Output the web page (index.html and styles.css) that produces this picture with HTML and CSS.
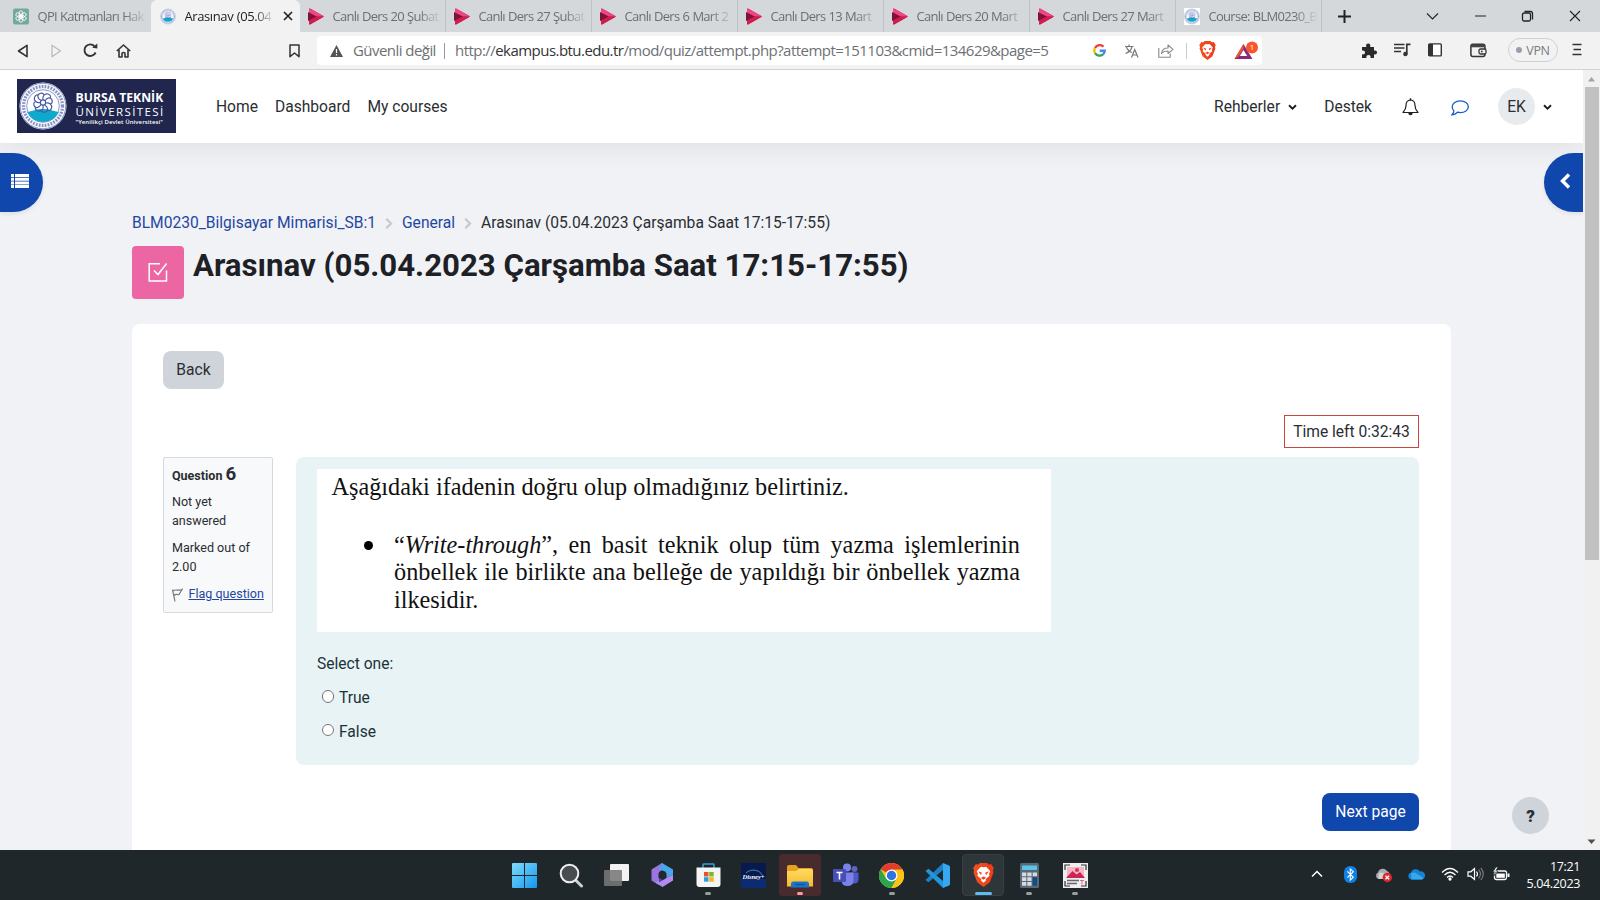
FILE: index.html
```html
<!DOCTYPE html>
<html lang="tr">
<head>
<meta charset="utf-8">
<title>Arasınav (05.04.2023 Çarşamba Saat 17:15-17:55)</title>
<link rel="stylesheet" href="styles.css">
</head>
<body>
<svg class="defs" aria-hidden="true">
  <defs>
    <linearGradient id="brave-g" x1="0" x2="1"><stop offset="0" stop-color="#f4511e"/><stop offset="1" stop-color="#f03a17"/></linearGradient>
    <linearGradient id="win-g" x1="0" y1="0" x2="1" y2="1"><stop offset="0" stop-color="#7fdcfb"/><stop offset="1" stop-color="#1296ee"/></linearGradient>
    <linearGradient id="fold-g" x1="0" y1="0" x2="0" y2="1"><stop offset="0" stop-color="#ffdc62"/><stop offset="1" stop-color="#f6b92c"/></linearGradient>
  </defs>
  <symbol id="play" viewBox="0 0 16 17">
    <path d="M1 1.500Q1 0 2.500.7L15.500 8Q16 8.500 15.500 9L2.500 16.300Q1 17 1 15.500z" fill="#d81b5a"/><path d="M0 4 9 8.500 0 13z" fill="#7d1338"/><path d="M1 1.500Q1 0 2.500.7L15.800 8.500H9L1 4.500z" fill="#ee4586"/><path d="M1 12.500 9 8.500h6.800L2.500 16.300Q1 17 1 15.500z" fill="#d01c50"/>
  </symbol>
  <symbol id="seal" viewBox="0 0 48 48">
    <circle cx="24" cy="24" r="23.500" fill="#f4f6fb"/>
    <circle cx="24" cy="24" r="22.800" fill="none" stroke="#6d7bb4" stroke-width=".8"/>
    <circle cx="24" cy="24" r="19.500" fill="none" stroke="#8290c4" stroke-width="3.200" stroke-dasharray="1.700 1.300"/>
    <circle cx="24" cy="24" r="16.300" fill="#fff" stroke="#7483bb" stroke-width=".8"/>
    <path d="M8.300 30C15 28.500 18 27 24 27s9 1.500 15.700 3C37 36.500 31 40 24 40S11 36.500 8.300 30z" fill="#0fa9cb"/>
    <g fill="none" stroke="#4a5aa3" stroke-width="1.200">
      <circle cx="24" cy="20.500" r="2.600"/>
      <path d="M24 18c-1-4 2-7 5-6s3 3 2 4M26 19c2-4 6-4 7-1s-1 4-2 4M26.500 21c4-1 7 2 6 5s-3 3-4 2M25.500 23c4 2 4 6 1 7s-4-1-4-2M24 23c1 4-2 7-5 6s-3-3-2-4M22 22.500c-2 4-6 4-7 1s1-4 2-4M21.500 20.500c-4 1-7-2-6-5s3-3 4-2M22 18.500c-4-2-4-6-1-7s4 1 4 2"/>
    </g>
  </symbol>
  <symbol id="brave" viewBox="0 0 20 23">
    <path d="M5 1.500 6.500 0h7L15 1.500l2.500-.3L20 5l-1 2 .6 2L16 18.500 10 23 4 18.500.4 9 1 7 0 5l2.500-3.800z" fill="url(#brave-g)"/>
    <path d="m10 4 2.500-.5 4 4.500-1.200 2.300.5 2-3.600 3 .2 1.400L10 19l-2.400-2.300.2-1.400-3.600-3 .5-2L3.500 8l4-4.500z" fill="#fff"/>
    <path d="m4.800 8 3.700 1.300-1 2.200zM15.200 8l-3.700 1.300 1 2.200zM7.500 14.200 10 13l2.500 1.200L10 16z" fill="#f0431b"/>
  </symbol>
  <symbol id="chev" viewBox="0 0 9 6"><path d="M1 1.200 4.500 4.600 8 1.200" fill="none" stroke="#1d2125" stroke-width="1.900"/></symbol>
</svg>

<div class="tabs">
  <div class="tab first">
    <svg class="fav" viewBox="0 0 17 17"><rect width="17" height="17" rx="2" fill="#74a899"/><g fill="none" stroke="#fff" stroke-width=".9"><rect x="6.500" y="2.500" width="4" height="7" rx="2"/><rect x="6.500" y="2.500" width="4" height="7" rx="2" transform="rotate(60 8.500 8.500)"/><rect x="6.500" y="2.500" width="4" height="7" rx="2" transform="rotate(120 8.500 8.500)"/><rect x="6.500" y="2.500" width="4" height="7" rx="2" transform="rotate(180 8.500 8.500)"/><rect x="6.500" y="2.500" width="4" height="7" rx="2" transform="rotate(240 8.500 8.500)"/><rect x="6.500" y="2.500" width="4" height="7" rx="2" transform="rotate(300 8.500 8.500)"/></g></svg>
    <span class="label">QPI Katmanları Hak</span>
  </div>
  <div class="tab active">
    <svg class="fav"><use href="#seal"/></svg>
    <span class="label">Arasınav (05.04</span>
    <svg class="close" viewBox="0 0 10 10"><path d="m1 1 8 8M9 1 1 9" stroke="#222" stroke-width="1.700"/></svg>
  </div>
  <div class="tab"><svg class="fav"><use href="#play"/></svg><span class="label">Canlı Ders 20 Şubat</span></div>
  <div class="tab"><svg class="fav"><use href="#play"/></svg><span class="label">Canlı Ders 27 Şubat</span></div>
  <div class="tab"><svg class="fav"><use href="#play"/></svg><span class="label">Canlı Ders 6 Mart 2</span></div>
  <div class="tab"><svg class="fav"><use href="#play"/></svg><span class="label">Canlı Ders 13 Mart</span></div>
  <div class="tab"><svg class="fav"><use href="#play"/></svg><span class="label">Canlı Ders 20 Mart</span></div>
  <div class="tab"><svg class="fav"><use href="#play"/></svg><span class="label">Canlı Ders 27 Mart</span></div>
  <div class="tab"><svg class="fav seal-bg"><use href="#seal"/></svg><span class="label">Course: BLM0230_B</span></div>
  <svg class="plus" viewBox="0 0 13 13"><path d="M6.500 0v13M0 6.500h13" stroke="#222" stroke-width="2"/></svg>
  <svg class="win" viewBox="0 0 160 14" fill="none" stroke="#222" stroke-width="1.100">
    <path d="m1 4.500 5.500 5.500L12 4.500M49 7h11M144 2l10 10M154 2 144 12"/>
    <rect x="96.500" y="4" width="8" height="8" rx="1.500" stroke-width="1.300"/><path d="M98.500 2.500h6q2 0 2 2v6" stroke-width="1.300"/>
  </svg>
</div>

<div class="toolbar">
  <div class="nav-icons">
    <svg width="12" height="14" viewBox="0 0 12 14"><path d="M10 1.300v11.400L1.500 7z" fill="none" stroke="#333" stroke-width="1.600" stroke-linejoin="round"/></svg>
    <svg width="12" height="14" viewBox="0 0 12 14"><path d="M2 1.300v11.400L10.500 7z" fill="none" stroke="#bbb" stroke-width="1.300" stroke-linejoin="round"/></svg>
    <svg width="15" height="15" viewBox="0 0 15 15"><path d="M12.600 9.500A5.800 5.800 0 1 1 11.600 3.300" fill="none" stroke="#333" stroke-width="1.900"/><path d="M9.200 4.800 14.300 5.600 14.300.6z" fill="#333"/></svg>
    <svg class="home" width="15" height="14" viewBox="0 0 15 14"><path d="M.8 7 7.500 1l6.700 6M3 5.700V13h3V9.500q0-1 1.500-1T9 9.500V13h3V5.700" fill="none" stroke="#333" stroke-width="1.600" stroke-linejoin="round"/></svg>
  </div>
  <svg class="bookmark" width="11" height="14" viewBox="0 0 11 14"><path d="M1 .9h9v11.800L5.500 9 1 12.700z" fill="none" stroke="#333" stroke-width="1.500" stroke-linejoin="round"/></svg>
  <div class="address">
    <svg class="warn" width="13" height="12" viewBox="0 0 13 12"><path d="M6.500 0 13 12H0z" fill="#555"/><path d="M6.500 4v4M6.500 9v1.400" stroke="#fff" stroke-width="1.200"/></svg>
    <span class="insecure">Güvenli değil</span><i class="bar"></i>
    <span class="url">http://<b>ekampus.btu.edu.tr</b>/mod/quiz/attempt.php?attempt=151103&amp;cmid=134629&amp;page=5</span>
    <div class="address-icons">
      <svg width="13" height="13" viewBox="0 0 13 13" fill="none" stroke-width="2.400"><path d="M10.500 2.800A5.200 5.200 0 0 0 2 4" stroke="#ea4335"/><path d="M2 4a5.200 5.200 0 0 0 0 5" stroke="#fbbc05"/><path d="M2 9a5.200 5.200 0 0 0 8 1.300" stroke="#34a853"/><path d="M10 10.300a5 5 0 0 0 1.700-3.600H6.700" stroke="#4285f4"/></svg>
      <svg width="14" height="14" viewBox="0 0 14 14" fill="none" stroke="#777" stroke-width="1.200"><path d="M0 2.500h8.500M4 .5v2M1.500 3C2.500 6 5 8 7 8.500M7 3C6 6.500 3 8.500.5 9.500M6.500 13.500l3.200-8 3.300 8M7.500 11h4.500"/></svg>
      <svg width="16" height="14" viewBox="0 0 16 14" fill="none" stroke="#888" stroke-width="1.100" stroke-linejoin="round"><path d="M.8 4v9.200h11.400V9.500M3.500 9.500C4 5.500 6 4 10 4V1l5 4.300L10 9.500V7C7 7 5 7.500 3.500 9.500z"/></svg>
      <i class="bar thin"></i>
      <svg class="brave-sm" width="17" height="19"><use href="#brave"/></svg>
      <svg width="26" height="20" viewBox="0 0 26 20"><path d="M9.500 3 18.500 18H.5z" fill="#8a2a7d"/><path d="M9.500 3 .5 18l4-2.300L9.500 7.500z" fill="#f0562c"/><path d="m9.500 9 3.700 6H5.800z" fill="#fff"/><circle cx="18" cy="6.500" r="6" fill="#fb542b"/><text x="18" y="9" text-anchor="middle" class="badge">1</text></svg>
    </div>
  </div>
  <div class="tools">
    <svg width="16" height="15" viewBox="0 0 16 15"><path d="M1 4h4.300C4.600 2 5.500.5 7.200.5S9.800 2 9.200 4H13v3.800c1.700-.6 3 .2 3 1.700s-1.300 2.300-3 1.700V15H9.500c.5-1.800-.4-3-2-3s-2.500 1.200-2 3H1v-3.700c1.700.4 3-.4 3-1.900S2.700 7.100 1 7.600z" fill="#2a2a2a"/></svg>
    <svg width="17" height="14" viewBox="0 0 17 14"><path d="M0 1.500h10.500M0 5h10.500M0 8.500h7" stroke="#333" stroke-width="1.700"/><path d="M12.800 11.500V1.400H16.500" fill="none" stroke="#333" stroke-width="1.700"/><circle cx="11.400" cy="11" r="2.200" fill="#333"/></svg>
    <svg width="14" height="14" viewBox="0 0 14 14"><rect x=".7" y=".9" width="12.600" height="12" rx="1" fill="#fff" stroke="#333" stroke-width="1.400"/><path d="M1 1h4v12H1z" fill="#333"/></svg>
    <svg class="wallet" width="17" height="15" viewBox="0 0 17 15"><rect x=".9" y="1.200" width="14" height="12.200" rx="2" fill="none" stroke="#333" stroke-width="1.500"/><path d="M1 1.500h14v2.800H1z" fill="#444"/><rect x="9" y="6" width="7" height="5" rx="1.500" fill="#f2f2f2" stroke="#333" stroke-width="1.300"/><circle cx="11.800" cy="8.500" r=".9" fill="#333"/></svg>
    <span class="vpn"><i></i>VPN</span>
    <svg width="10" height="14" viewBox="0 0 10 14"><path d="M.5 1.500h9M1.500 6.500H9M.5 11.500h9" stroke="#333" stroke-width="1.700"/></svg>
  </div>
</div>

<div class="viewport">
  <div class="page">
    <header class="navbar">
      <div class="brand">
        <svg class="brand-seal"><use href="#seal"/></svg>
        <div class="brand-text"><strong>BURSA TEKNİK</strong><span>ÜNİVERSİTESİ</span><em>"Yenilikçi Devlet Üniversitesi"</em></div>
      </div>
      <nav class="primary"><a>Home</a><a>Dashboard</a><a>My courses</a></nav>
      <div class="usernav">
        <a>Rehberler</a><svg class="chev"><use href="#chev"/></svg>
        <a class="destek">Destek</a>
        <svg class="bell" width="17" height="18" viewBox="0 0 17 18"><path d="M8.500 2C5.300 2.200 4 4.500 4 7.500c0 3-1 5-3 7h15c-2-2-3-4-3-7 0-3-1.300-5.300-4.500-5.500z" fill="none" stroke="#1d2125" stroke-width="1.200" stroke-linejoin="round"/><path d="M8.500.3v1.800" stroke="#1d2125" stroke-width="1.500"/><path d="M6.300 15a2.200 2.200 0 0 0 4.400 0z" fill="#1d2125"/></svg>
        <svg class="bubble" width="18" height="16" viewBox="0 0 18 16"><path d="M9.300.8c4.500 0 8 2.500 8 5.900s-3.500 5.900-8 5.900c-1 0-2-.2-2.800-.4C5 13.700 3 14.600 1 14.800c1.200-1.200 1.800-2.500 1.900-3.900C1.700 9.800 1.200 8.300 1.200 6.700c0-3.400 3.600-5.900 8.100-5.900z" fill="none" stroke="#1a5cc8" stroke-width="1.300"/></svg>
        <span class="avatar">EK</span><svg class="chev user"><use href="#chev"/></svg>
      </div>
    </header>

    <button class="drawer left"><svg width="18" height="14" viewBox="0 0 18 14" fill="#fff"><path d="M0 0h3v3H0zM4 0h14v3H4zM0 3.700h3v3H0zM4 3.700h14v3H4zM0 7.400h3v3H0zM4 7.400h14v3H4zM0 11.100h3V14H0zM4 11.100h14V14H4z"/></svg></button>
    <button class="drawer right"><svg width="11" height="16" viewBox="0 0 11 16"><path d="M9 1.500 2.500 8 9 14.500" fill="none" stroke="#fff" stroke-width="3.400"/></svg></button>

    <main class="main">
      <div class="crumbs">
        <a>BLM0230_Bilgisayar Mimarisi_SB:1</a>
        <svg width="8" height="11" viewBox="0 0 8 11"><path d="M1.300.8 6 5.500 1.300 10.200" fill="none" stroke="#c6cad0" stroke-width="2.300"/></svg>
        <a>General</a>
        <svg width="8" height="11" viewBox="0 0 8 11"><path d="M1.300.8 6 5.500 1.300 10.200" fill="none" stroke="#c6cad0" stroke-width="2.300"/></svg>
        <span>Arasınav (05.04.2023 Çarşamba Saat 17:15-17:55)</span>
      </div>
      <div class="title">
        <span class="activity"><svg width="20" height="20" viewBox="0 0 20 20" fill="none" stroke="#fff" stroke-width="1.500"><path d="M12 1.700H1.200V19H18.500V8.500"/><path d="m6 8.500 4 4L18.600 1.500"/></svg></span>
        <h1>Arasınav (05.04.2023 Çarşamba Saat 17:15-17:55)</h1>
      </div>
      <section class="card">
        <button class="btn back">Back</button>
        <div class="timer-row"><div class="timer">Time left 0:32:43</div></div>
        <div class="question">
          <aside class="info">
            <h3>Question <span>6</span></h3>
            <p>Not yet<br>answered</p>
            <p>Marked out of<br>2.00</p>
            <div class="flag"><svg width="11" height="14" viewBox="0 0 11 14"><path d="M.5 1.500 3 13.500M1 3C4 .5 6 3.500 10 1.500L7 6.500C5 7 4 5.500 2 7.500" fill="none" stroke="#777" stroke-width="1.200"/></svg><a>Flag question</a></div>
          </aside>
          <div class="content">
            <div class="sheet">
              <p>Aşağıdaki ifadenin doğru olup olmadığınız belirtiniz.</p>
              <div class="item">
                <i class="dot"></i>
                <div class="lines"><p class="just">“<em>Write-through</em>”, en basit teknik olup tüm yazma işlemlerinin</p><p class="just">önbellek ile birlikte ana belleğe de yapıldığı bir önbellek yazma</p><p>ilkesidir.</p></div>
              </div>
            </div>
            <div class="prompt">Select one:</div>
            <label class="answer"><i class="radio"></i>True</label>
            <label class="answer"><i class="radio"></i>False</label>
          </div>
        </div>
        <div class="next-row"><button class="btn next">Next page</button></div>
      </section>
    </main>
    <button class="help">?</button>
  </div>
  <div class="scrollbar">
    <svg width="9" height="5" viewBox="0 0 9 5"><path d="M4.500 0 8 4.500H1z" fill="#a3a3a3"/></svg>
    <i class="thumb"></i>
    <svg class="down" width="9" height="5" viewBox="0 0 9 5"><path d="M4.500 5 8.500.5h-8z" fill="#505050"/></svg>
  </div>
</div>

<footer class="taskbar">
  <div class="apps">
    <span class="app"><svg width="25" height="25" viewBox="0 0 25 25" fill="url(#win-g)"><path d="M1 0h11v12H0V1q0-1 1-1zM13 0h11q1 0 1 1v11H13zM0 13h12v12H1q-1 0-1-1zM13 13h12v11q0 1-1 1H13z"/></svg></span>
    <span class="app search"><svg width="25" height="25" viewBox="0 0 25 25"><path d="m16.500 17 6 6" stroke="#cfcfcf" stroke-width="3" stroke-linecap="round"/><circle cx="10.500" cy="10.500" r="8.800" fill="#4a4d50" stroke="#eee" stroke-width="2"/></svg></span>
    <span class="app"><svg width="25" height="25" viewBox="0 0 25 25"><rect x="6" y="1" width="19" height="17" rx="1" fill="#f2f2f2"/><rect y="7" width="18" height="16" rx="1" fill="#777" fill-opacity=".88"/></svg></span>
    <span class="app"><svg width="25" height="25" viewBox="0 0 25 25"><path d="M12 0 1.500 6.500v11L9 22V9l7-4z" fill="#9a74e0"/><path d="m12 0 11 6.500v5L16 15V9L9 6z" fill="#48a7ea"/><path d="M23 11.500v6L12.500 24 5 19.500l8-3z" fill="#b58af0"/><path d="M16 9v6.500l-7 4V13z" fill="#4b4fae"/><path d="m12.500 8 4 2.200v4.600l-4 2.200-4-2.200v-4.600z" fill="#23282b"/></svg></span>
    <span class="app run"><svg width="25" height="25" viewBox="0 0 25 25"><path d="M7 6V1.500Q7 1 8 1h9q1 0 1 .5V6" fill="none" stroke="#36a3d9" stroke-width="1.500"/><path d="M.5 4.500h24V21q0 3-3 3h-18q-3 0-3-3z" fill="#f5f5f5"/><path d="M8 9h4.500v4.500H8z" fill="#e8502f"/><path d="M13.200 9h4.500v4.500h-4.500z" fill="#7cb62c"/><path d="M8 14.200h4.500v4.500H8z" fill="#2a9fe0"/><path d="M13.200 14.200h4.500v4.500h-4.500z" fill="#f7b719"/></svg></span>
    <span class="app"><svg width="25" height="25" viewBox="0 0 25 25"><rect width="25" height="25" rx="1" fill="#07194d"/><path d="M0 16h25v9H0z" fill="#0b2c73"/><path d="M5 10C10 5 19 7 21 12" fill="none" stroke="#5fb9e8" stroke-width=".7"/><text x="12.500" y="16" text-anchor="middle" class="disney">Disney+</text></svg></span>
    <span class="app run alert"><svg width="26" height="25" viewBox="0 0 26 25"><path d="M0 4q0-2 2-2h7l2.500 3H24q2 0 2 2v14H0z" fill="#e5a21f"/><path d="M0 8h9l3-2h12q2 0 2 2v15.500H0z" fill="url(#fold-g)"/><path d="M4 24.500V21q0-2.500 2.500-2.500h13Q22 18.500 22 21v3.500z" fill="#1b76c9"/><path d="M8 21.500h10" stroke="#0f559e" stroke-width="1.500"/></svg></span>
    <span class="app"><svg width="26" height="25" viewBox="0 0 26 25"><circle cx="21.500" cy="6" r="3" fill="#5b62c8"/><circle cx="14" cy="4.500" r="4" fill="#7b83eb"/><path d="M17 9.500h8.500V16q0 4.500-4.500 4.500h-4z" fill="#5059c9"/><path d="M9 9.500h11.500V17q0 6-6 6T8.500 17z" fill="#7b83eb"/><rect y="6" width="13" height="13" rx="1" fill="#464eb8"/><path d="M3.500 9.500h6M6.500 9.500v7" stroke="#fff" stroke-width="1.600"/></svg></span>
    <span class="app run"><svg width="25" height="25" viewBox="0 0 25 25"><circle cx="12.500" cy="12.500" r="12.500" fill="#fbc414"/><path d="M12.500 12.500 1.700 6.200A12.500 12.500 0 0 1 23.300 6.200z" fill="#e33b2e"/><path d="M12.500 12.500 7 15.500 1.700 6.200A12.500 12.500 0 0 0 12.500 25L18 15.500z" fill="#2da44e"/><path d="M12.500 6.500h11L25 12.500 12.500 25l5.500-9.500z" fill="#fbc414"/><path d="M23.300 6.200A12.500 12.500 0 0 1 12.500 25L18 15.500z" fill="#fbc414"/><circle cx="12.500" cy="12.500" r="6" fill="#fff"/><circle cx="12.500" cy="12.500" r="4.700" fill="#2f72e0"/></svg></span>
    <span class="app"><svg width="25" height="25" viewBox="0 0 25 25"><path d="M18 0v7L3.500 19.300.5 17z" fill="#1b80c8"/><path d="M18 25v-7L3.500 5.700.5 8z" fill="#2196dd"/><path d="M18 0l6 2.500q1 .5 1 1.500v17q0 1-1 1.500L18 25z" fill="#35a9ef"/></svg></span>
    <span class="app run on"><svg width="21" height="25" viewBox="0 0 20 24"><use href="#brave" width="20" height="23"/></svg></span>
    <span class="app run"><svg width="19" height="25" viewBox="0 0 19 25"><rect width="19" height="25" rx="1.500" fill="#596875"/><rect x="2" y="2.500" width="15" height="4.500" fill="#58c5e8"/><path d="M2 9.500h4.300v3.700H2zM7.300 9.500h4.300v3.700H7.300zM2 14.200h4.300v3.700H2zM7.300 14.200h4.300v3.700H7.300zM2 19h4.300v3.700H2zM7.300 19h4.300v3.700H7.300zM12.700 9.500H17v3.700h-4.300z" fill="#d4dadf"/><path d="M12.700 14.200H17v8.500h-4.300z" fill="#124b8d"/></svg></span>
    <span class="app run"><svg width="25" height="25" viewBox="0 0 25 25"><rect width="25" height="25" fill="#efeeee"/><path d="M2 7V2h5M18 2h5v5M2 18v5h5M18 23h5v-5" fill="none" stroke="#333" stroke-width="1.200"/><path d="M4 4h17v11H4z" fill="#f5b5c4"/><path d="m3 15 6.500-7 4 3.500L17 9l5 6z" fill="#cf2453"/><circle cx="14" cy="7" r="2" fill="#d8325e"/><path d="M4 17.500h12M4 20.500h10" stroke="#667" stroke-width="1.300"/><path d="M17 17.500h4M19 17.500v4" stroke="#d65c74" stroke-width=".9"/></svg></span>
  </div>
  <div class="tray">
    <svg width="12" height="8" viewBox="0 0 12 8"><path d="m1 6.500 5-5 5 5" fill="none" stroke="#fff" stroke-width="1.500"/></svg>
    <svg width="13" height="17" viewBox="0 0 13 17"><rect width="13" height="17" rx="6" fill="#1080e6"/><path d="m3.300 5.300 6 6-3 2.700V3l3 2.700-6 6" fill="none" stroke="#fff" stroke-width="1.100"/></svg>
    <svg width="17" height="17" viewBox="0 0 17 17"><path d="M3.500 13A3.500 3.500 0 0 1 3 6.500 5 5 0 0 1 12 5q3 1 2.500 4.500L11 13z" fill="#a9adb0"/><path d="M4 7q4-2 8 3v3H3.500z" fill="#d2d4d6"/><circle cx="12.300" cy="11.500" r="4.700" fill="#d9282f"/><path d="m10.500 9.700 3.600 3.600M14.100 9.700l-3.600 3.600" stroke="#fff" stroke-width="1.300"/></svg>
    <svg width="17" height="12" viewBox="0 0 17 12"><path d="M3.500 11.500A3.500 3.500 0 0 1 3 4.600 5 5 0 0 1 12 3.500a4 4 0 0 1 2 8z" fill="#1781d2"/><path d="M3.500 11.500 3 5l4-.5 8.500 5.500q-1 1.500-2 1.500z" fill="#35a8ee"/></svg>
    <svg width="18" height="14" viewBox="0 0 18 14" fill="none" stroke="#fff" stroke-width="1.300"><path d="M1 5.500q8-8 16 0M3.500 8q5.500-5.500 11 0M6 10.500q3-3 6 0"/><circle cx="9" cy="12" r="1" fill="#fff"/></svg>
    <svg width="17" height="14" viewBox="0 0 17 14" fill="none" stroke="#fff" stroke-width="1.200"><path d="M1 4.800h2.800L7.500 1.500v11L3.800 9.200H1z"/><path d="M9.500 4.500q2 2.500 0 5"/><path d="M11.700 2.700q3.600 4.300 0 8.600M13.800 1q5 6 0 12" stroke="#71777a"/></svg>
    <svg width="18" height="14" viewBox="0 0 18 14"><rect x="2.500" y="4" width="12" height="8.500" rx="1.800" fill="none" stroke="#fff" stroke-width="1.300"/><rect x="4.300" y="6.500" width="8.500" height="4.300" fill="#fff"/><path d="M15.500 6.500h2v3.500h-2z" fill="#fff"/><path d="M4 0 .8 5h2.500L2 9l4-5H3.800L6 0z" fill="#fff" stroke="#21272a" stroke-width=".7"/></svg>
    <div class="clock"><span>17:21</span><span>5.04.2023</span></div>
  </div>
</footer>
</body>
</html>
```
FILE: styles.css
```css
* { box-sizing: border-box; }
body {
  margin: 0;
  width: 1600px;
  height: 900px;
  overflow: hidden;
  display: flex;
  flex-direction: column;
  font-family: Roboto, sans-serif;
  font-size: 15.6px;
  color: #2a2e32;
  background: #f0f2f6;
}
svg { display: block; flex: none; }
p, h1, h3 { margin: 0; }
button { border: 0; padding: 0; font: inherit; color: inherit; }
.defs { position: absolute; width: 0; height: 0; }

/* Browser tabs */
.tabs {
  height: 32px;
  flex: none;
  display: flex;
  align-items: center;
  background: #d4d8db;
  font: 13px/20px "Open Sans", "Noto Sans", sans-serif;
  letter-spacing: -.72px;
  color: #6b6f73;
  padding-left: 4.500px;
}
.tab {
  width: 146px;
  height: 32px;
  flex: none;
  display: flex;
  align-items: center;
  padding-left: 8px;
  border-right: 1px solid #bfc3c7;
}
.fav { width: 16px; height: 17px; margin-right: 9px; }
.seal-bg { background: #fff; }
.label {
  flex: 1;
  overflow: hidden;
  white-space: nowrap;
  margin-right: 3px;
  word-spacing: .5px;
  -webkit-mask-image: linear-gradient(90deg, #000 78%, transparent);
  mask-image: linear-gradient(90deg, #000 78%, transparent);
}
.tab.first { border: 0; padding-left: 8px; }
.tab.active { width: 149px; background: #f2f2f2; color: #222; border: 0; padding-left: 9px; border-radius: 6px 6px 0 0; }
.tab.active .label { flex: none; width: 89px; margin-right: 9px; letter-spacing: -.4px; }
.close { width: 10px; height: 10px; }
.plus { width: 13px; height: 13px; margin-left: 16px; }
.win { width: 160px; height: 14px; margin-left: 75px; }

/* Address toolbar */
.toolbar {
  height: 38px;
  flex: none;
  display: flex;
  align-items: center;
  background: #f2f2f2;
  border-bottom: 1px solid #d0d2d3;
  font-family: "Open Sans", "Noto Sans", sans-serif;
}
.nav-icons { display: flex; align-items: center; gap: 21px; margin-left: 17px; width: 272px; }
.home { margin-left: -3.500px; }
.address {
  width: 945px;
  height: 29px;
  margin-left: 17px;
  background: #fff;
  border-radius: 4px;
  display: flex;
  align-items: center;
  padding-left: 13px;
  font-size: 15px;
  color: #6e7174;
  white-space: nowrap;
}
.insecure { margin-left: 10px; width: 84px; letter-spacing: -.55px; padding-bottom: 2px; }
.bar { width: 1px; height: 16px; background: #999; margin: 0 10px 0 7px; }
.url { width: 594px; letter-spacing: -.54px; padding-bottom: 2px; }
.url b { font-weight: 400; color: #333; }
.address-icons { display: flex; align-items: center; margin-left: 44px; gap: 19px; }
.bar.thin { background: #ccc; margin: 0 -7px 0 -7px; }
.brave-sm { margin-right: -1px; }
.badge { font: 8px "Open Sans", sans-serif; fill: #fff; }
.tools { display: flex; align-items: center; gap: 17px; margin-left: 99px; padding-bottom: 1px; }
.wallet { margin: 0 4px 0 11px; }
.vpn {
  width: 50px;
  height: 24px;
  display: flex;
  align-items: center;
  justify-content: center;
  gap: 4px;
  border: 1px solid #cfd1d3;
  border-radius: 12px;
  font-size: 12.500px;
  letter-spacing: -.3px;
  color: #777b80;
  margin-right: -3px;
}
.vpn i { width: 6px; height: 6px; border-radius: 3px; background: #9a9eae; }

/* Page */
.viewport { height: 780px; flex: none; display: flex; }
.page { position: relative; width: 1583px; height: 780px; overflow: hidden; background: #f0f2f6; }
.navbar {
  position: relative;
  height: 73px;
  display: flex;
  align-items: center;
  background: #fff;
  padding-left: 16.500px;
  box-shadow: 0 2px 30px rgba(0, 0, 0, .09);
}
.brand { width: 159px; height: 54px; margin-bottom: 1px; background: #20264e; display: flex; align-items: center; padding-left: 2.500px; color: #fff; }
.brand-seal { width: 48px; height: 48px; }
.brand-text { display: flex; flex-direction: column; margin-left: 8.500px; padding-top: 6px; font-family: "Open Sans", sans-serif; white-space: nowrap; }
.brand-text strong { font-size: 12.200px; line-height: 14px; }
.brand-text span { font-size: 11.500px; line-height: 13px; letter-spacing: 1.400px; }
.brand-text em { font-size: 6px; line-height: 9px; font-style: normal; font-weight: 600; letter-spacing: .08px; }
.primary { display: flex; gap: 17px; margin-left: 40.500px; }
.usernav { flex: 1; display: flex; align-items: center; justify-content: flex-end; padding-right: 31px; }
.chev { width: 9px; height: 6px; margin-left: 8px; }
.destek { margin-left: 27px; }
.bell { margin-left: 30px; }
.bubble { margin: 2px 0 0 32px; }
.avatar { width: 37px; height: 37px; border-radius: 50%; background: #e8ebee; display: flex; align-items: center; justify-content: center; margin-left: 29px; }

.drawer {
  position: absolute;
  top: 83px;
  height: 59px;
  display: flex;
  align-items: center;
  background: #0f47ad;
  box-shadow: 0 2px 4px rgba(0, 0, 0, .08);
  padding-bottom: 3px;
}
.drawer.left { left: 0; width: 43px; border-radius: 0 30px 30px 0; padding-left: 10.500px; }
.drawer.right { right: 0; width: 39px; border-radius: 30px 0 0 30px; padding-left: 16px; }

.main { padding: 69px 0 0 132px; width: 1451px; }
.crumbs { height: 23px; display: flex; align-items: center; line-height: 23px; white-space: nowrap; }
.crumbs a { color: #1f47a0; }
.crumbs svg { margin: 0 8.700px 0 9.300px; }
.title { display: flex; height: 53px; margin-top: 11px; }
.activity { width: 52px; height: 52.500px; background: #eb66a2; border-radius: 4px; display: flex; align-items: center; justify-content: center; }
h1 { margin-left: 9px; font-size: 31.200px; line-height: 39px; font-weight: 700; white-space: nowrap; color: #1d2125; }
.card { margin-top: 25px; height: 560px; background: #fff; border-radius: 8px; padding: 27px 32px 0 31px; }
.btn { display: block; border-radius: 8px; height: 38px; }
.back { width: 61px; background: #ced4da; }
.timer-row { display: flex; justify-content: flex-end; margin-top: 26px; }
.timer { width: 135px; height: 33px; border: 1px solid #c2493c; display: flex; align-items: center; justify-content: center; }
.question { display: flex; gap: 23px; margin-top: 9px; }
.info {
  width: 110px;
  height: 156px;
  background: #f8f9fa;
  border: 1px solid #d4d9de;
  border-radius: 2px;
  padding: 3px 0 0 8px;
  font-size: 12.550px;
  line-height: 18.700px;
  white-space: nowrap;
}
.info h3 { font-size: 12.500px; line-height: 26px; font-weight: 700; }
.info h3 span { font-size: 18.750px; }
.info p { margin-top: 4px; }
.info p + p { margin-top: 9px; }
.flag { display: flex; align-items: center; gap: 5.500px; margin-top: 8.500px; }
.flag a { color: #1f47a0; text-decoration: underline; }
.content { width: 1123px; height: 308px; background: #e7f3f5; border-radius: 8px; padding: 12px 21px; color: #1d3139; }
.sheet {
  width: 734px;
  height: 163px;
  background: #fff;
  color: #111;
  padding: 4px 31px 0 14.500px;
  font: 24.250px/27.500px "Liberation Serif", serif;
  white-space: nowrap;
}
.item { display: flex; margin-top: 30px; }
.dot { flex: none; width: 9px; height: 9px; border-radius: 50%; background: #000; margin: 10px 21.500px 0 32px; }
.lines { flex: 1; }
.just { text-align: justify; text-align-last: justify; }
.prompt { margin: 21px 0 5.500px; line-height: 23px; }
.answer { display: flex; align-items: center; height: 33.500px; padding-left: 4.500px; }
.radio { width: 12.500px; height: 12.500px; border: 1px solid #767676; border-radius: 50%; background: #fff; margin: 0 5px 4px 0; }
.next-row { display: flex; justify-content: flex-end; margin-top: 28px; }
.next { width: 97px; background: #0f47ad; color: #fff; }
.help { position: absolute; left: 1512px; top: 727px; width: 37px; height: 37px; border-radius: 50%; background: #ced4da; font-weight: 900; font-size: 17px; }

.scrollbar { width: 17px; background: #f1f1f1; display: flex; flex-direction: column; align-items: center; padding: 7px 0 6px; }
.thumb { width: 14px; height: 473px; background: #c1c1c1; margin-top: 5px; }
.down { margin-top: auto; }

/* Taskbar */
.taskbar { height: 50px; flex: none; display: flex; background: #20272a; color: #fff; }
.apps { display: flex; margin-left: 503.500px; gap: 3.900px; padding-top: 4px; }
.app { position: relative; width: 42px; height: 42px; display: flex; align-items: center; justify-content: center; border-radius: 4px; padding-top: 1px; }
.search { padding-left: 3px; }
.run::after { content: ""; position: absolute; left: 18px; bottom: 1px; width: 6px; height: 3px; border-radius: 2px; background: #9a9d9f; }
.alert { background: #492b2d; }
.alert::after { background: #f79da0; }
.on { background: #2f363a; border: 1px solid #394044; }
.on::after { left: 12px; bottom: 0; width: 17px; background: #5ebcf2; }
.disney { font: italic bold 6.500px "Liberation Serif", serif; fill: #fff; }
.tray { flex: 1; display: flex; align-items: center; justify-content: flex-end; gap: 16px; padding-right: 20px; }
.tray svg { margin-bottom: 2px; }
.tray svg:nth-child(2) { margin-left: 5px; }
.tray svg:nth-child(3) { margin-left: 2px; }
.tray svg:nth-child(6) { margin-left: -8px; }
.tray svg:nth-child(7) { margin-left: -8px; }
.clock { display: flex; flex-direction: column; align-items: flex-end; width: 54px; font: 12.500px/17px "Open Sans", "Noto Sans", sans-serif; letter-spacing: -.35px; padding-bottom: 1px; }
```
